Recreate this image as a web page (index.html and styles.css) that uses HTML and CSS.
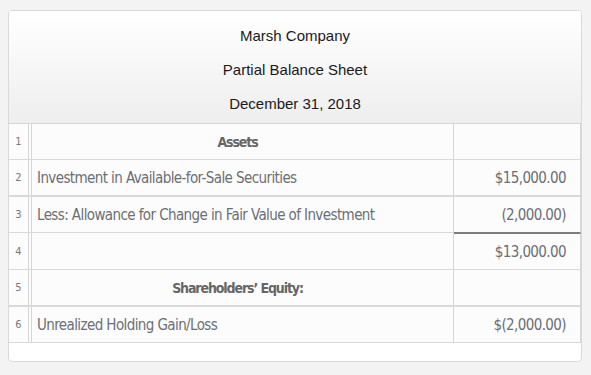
FILE: index.html
```html
<!DOCTYPE html>
<html>
<head>
<meta charset="utf-8">
<link rel="stylesheet" href="styles.css">
</head>
<body>
<div class="card">
  <div class="header">
    <div class="title">Marsh Company</div>
    <div class="title">Partial Balance Sheet</div>
    <div class="title">December 31, 2018</div>
  </div>
  <div class="sheet">
    <div class="row">
      <div class="num">1</div>
      <div class="label center bold">Assets</div>
      <div class="value"></div>
    </div>
    <div class="row thick">
      <div class="num">2</div>
      <div class="label">Investment in Available-for-Sale Securities</div>
      <div class="value">$15,000.00</div>
    </div>
    <div class="row">
      <div class="num">3</div>
      <div class="label">Less: Allowance for Change in Fair Value of Investment</div>
      <div class="value dark-bottom">(2,000.00)</div>
    </div>
    <div class="row tall">
      <div class="num">4</div>
      <div class="label"></div>
      <div class="value dark-top">$13,000.00</div>
    </div>
    <div class="row thick">
      <div class="num">5</div>
      <div class="label center bold">Shareholders’ Equity:</div>
      <div class="value"></div>
    </div>
    <div class="row">
      <div class="num">6</div>
      <div class="label">Unrealized Holding Gain/Loss</div>
      <div class="value">$(2,000.00)</div>
    </div>
  </div>
</div>
</body>
</html>
```

FILE: styles.css
```css
html, body {
  background: #f2f3f2;
}
body {
  margin: 10px 8px;
}
.card {
  width: 574px;
  box-sizing: border-box;
  background: #ffffff;
  border: 1px solid #d9d9d9;
  border-radius: 4px;
  padding-bottom: 18px;
  overflow: hidden;
}
.header {
  background: linear-gradient(to bottom, #ffffff 0%, #eeeeee 100%);
  border-bottom: 1px solid #d6d6d6;
  padding: 8px 0 2px;
}
.title {
  font-family: "Liberation Sans", Arial, sans-serif;
  font-size: 15px;
  line-height: 34px;
  color: #1a1a1a;
  text-align: center;
}
.sheet {
  display: flex;
  flex-direction: column;
  font-family: "DejaVu Sans Condensed", "Liberation Sans", sans-serif;
  font-stretch: condensed;
  color: #6b6f75;
  background: #fcfcfc;
}
.row {
  display: grid;
  grid-template-columns: 20px minmax(0, 1fr) 127px;
  border-bottom: 1px solid #d9d9d9;
}
.row.thick {
  border-bottom: 2px solid #d9d9d9;
}
.num {
  border-right: 1px solid #d6d6d6;
  font-size: 11px;
  color: #7a7a7a;
  display: flex;
  align-items: center;
  justify-content: center;
  height: 35px;
}
.row.tall .num {
  height: 36px;
}
.label {
  margin-left: 2px;
  border-left: 1px solid #d6d6d6;
  border-right: 1px solid #d6d6d6;
  font-size: 15px;
  letter-spacing: -0.6px;
  padding: 1px 15px 0 5px;
  display: flex;
  align-items: center;
  white-space: nowrap;
  overflow: hidden;
}
.label.center {
  justify-content: center;
}
.label.bold {
  font-size: 14px;
  font-weight: bold;
  letter-spacing: -1.1px;
  color: #666666;
}
.value {
  border-right: 1px solid #d6d6d6;
  font-size: 15px;
  letter-spacing: -0.6px;
  padding: 1px 14px 0 0;
  display: flex;
  align-items: center;
  justify-content: flex-end;
}
.value.dark-bottom {
  border-bottom: 1px solid #7d7d7d;
  margin-bottom: -1px;
}
.value.dark-top {
  border-top: 1px solid #7d7d7d;
}
```
